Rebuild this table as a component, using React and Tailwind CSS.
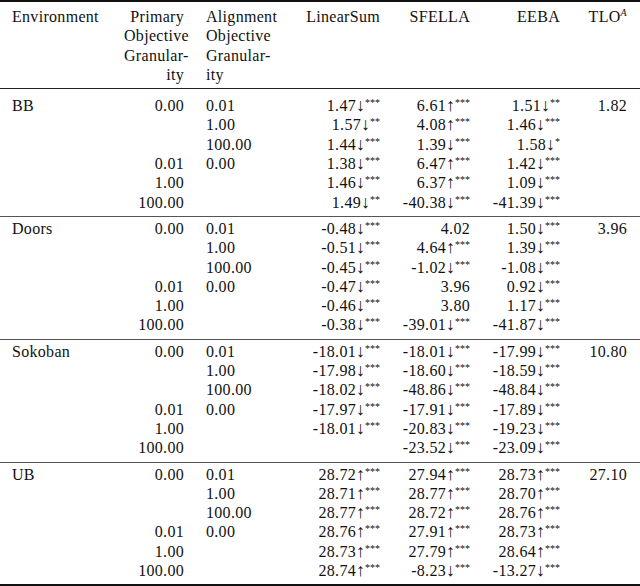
import React from "react";

const sections = [
  {
    env: "BB",
    tlo: "1.82",
    cls: "border-t-[1.5px] border-[#222] pt-[7px] pb-[4px]",
    rows: [
      ["0.00", "0.01", "1.47 d 3", "6.61 u 3", "1.51 d 2"],
      ["", "1.00", "1.57 d 2", "4.08 u 3", "1.46 d 3"],
      ["", "100.00", "1.44 d 3", "1.39 d 3", "1.58 d 1"],
      ["0.01", "0.00", "1.38 d 3", "6.47 u 3", "1.42 d 3"],
      ["1.00", "", "1.46 d 3", "6.37 u 3", "1.09 d 3"],
      ["100.00", "", "1.49 d 2", "-40.38 d 3", "-41.39 d 3"],
    ],
  },
  {
    env: "Doors",
    tlo: "3.96",
    cls: "border-t border-[#555] pt-[2px] pb-[4px]",
    rows: [
      ["0.00", "0.01", "-0.48 d 3", "4.02", "1.50 d 3"],
      ["", "1.00", "-0.51 d 3", "4.64 u 3", "1.39 d 3"],
      ["", "100.00", "-0.45 d 3", "-1.02 d 3", "-1.08 d 3"],
      ["0.01", "0.00", "-0.47 d 3", "3.96", "0.92 d 3"],
      ["1.00", "", "-0.46 d 3", "3.80", "1.17 d 3"],
      ["100.00", "", "-0.38 d 3", "-39.01 d 3", "-41.87 d 3"],
    ],
  },
  {
    env: "Sokoban",
    tlo: "10.80",
    cls: "border-t border-[#555] pt-[2px] pb-[4px]",
    rows: [
      ["0.00", "0.01", "-18.01 d 3", "-18.01 d 3", "-17.99 d 3"],
      ["", "1.00", "-17.98 d 3", "-18.60 d 3", "-18.59 d 3"],
      ["", "100.00", "-18.02 d 3", "-48.86 d 3", "-48.84 d 3"],
      ["0.01", "0.00", "-17.97 d 3", "-17.91 d 3", "-17.89 d 3"],
      ["1.00", "", "-18.01 d 3", "-20.83 d 3", "-19.23 d 3"],
      ["100.00", "", "", "-23.52 d 3", "-23.09 d 3"],
    ],
  },
  {
    env: "UB",
    tlo: "27.10",
    cls: "border-t border-[#555] pt-[2px] pb-[4px]",
    rows: [
      ["0.00", "0.01", "28.72 u 3", "27.94 u 3", "28.73 u 3"],
      ["", "1.00", "28.71 u 3", "28.77 u 3", "28.70 u 3"],
      ["", "100.00", "28.77 u 3", "28.72 u 3", "28.76 u 3"],
      ["0.01", "0.00", "28.76 u 3", "27.91 u 3", "28.73 u 3"],
      ["1.00", "", "28.73 u 3", "27.79 u 3", "28.64 u 3"],
      ["100.00", "", "28.74 u 3", "-8.23 d 3", "-13.27 d 3"],
    ],
  },
];

const grid =
  "grid grid-cols-[112px_60px_116px_80px_90px_90px_67px] pl-[12px] leading-[19.3px]";

function Val({ text }) {
  if (!text) return <div />;
  const [num, dir, stars] = text.split(" ");
  return (
    <div className="text-right whitespace-nowrap">
      {num}
      {dir && (
        <span className="text-[18px] leading-none tracking-normal">
          {dir === "u" ? "↑" : "↓"}
        </span>
      )}
      {stars && (
        <span className="relative -top-[5px] text-[10px] tracking-normal leading-none">
          {"*".repeat(Number(stars))}
        </span>
      )}
    </div>
  );
}

function Section({ s }) {
  return (
    <div className={s.cls}>
      {s.rows.map((r, i) => (
        <div key={i} className={grid}>
          <div>{i === 0 ? s.env : ""}</div>
          <div className="text-right">{r[0]}</div>
          <div className="pl-[22px]">{r[1]}</div>
          <Val text={r[2]} />
          <Val text={r[3]} />
          <Val text={r[4]} />
          <div className="text-right">{i === 0 ? s.tlo : ""}</div>
        </div>
      ))}
    </div>
  );
}

export default function App() {
  return (
    <div className="w-[640px] h-[586px] bg-white text-[#111] font-[Liberation_Serif,Times_New_Roman,serif] text-[16px] tracking-[0.3px]">
      <div className="border-t-2 border-[#111]">
        {/* header */}
        <div className={grid + " pt-[5px] pb-[4px]"}>
          <div>Environment</div>
          <div className="text-right">
            Primary
            <br />
            Objective
            <br />
            Granular-
            <br />
            ity
          </div>
          <div className="pl-[22px]">
            Alignment
            <br />
            Objective
            <br />
            Granular-
            <br />
            ity
          </div>
          <div className="text-right">LinearSum</div>
          <div className="text-right">SFELLA</div>
          <div className="text-right">EEBA</div>
          <div className="text-right">
            TLO
            <span className="relative -top-[6px] text-[10px] italic leading-none">A</span>
          </div>
        </div>
        {sections.map((s) => (
          <Section key={s.env} s={s} />
        ))}
        <div className="border-t-2 border-[#111]" />
      </div>
    </div>
  );
}
